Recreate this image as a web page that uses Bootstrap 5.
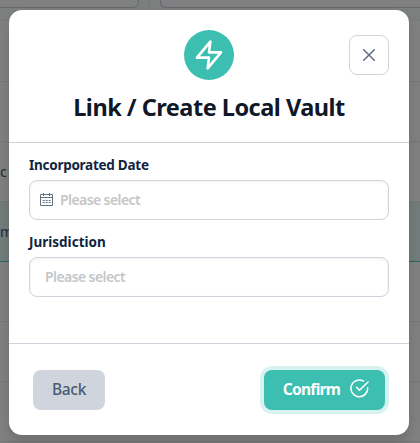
<!DOCTYPE html>
<html lang="en">
<head>
<meta charset="utf-8">
<meta name="viewport" content="width=device-width, initial-scale=1">
<title>Link / Create Local Vault</title>
<link href="https://cdn.jsdelivr.net/npm/bootstrap@5.3.0/dist/css/bootstrap.min.css" rel="stylesheet">
<style>
  body { font-family: "Segoe UI", "Noto Sans", "Open Sans", sans-serif; background: #808080; height: 443px; overflow: hidden; }
  .page-behind { height: 443px; color: #252a36; font-size: 14px; }
  .filters { height: 21px; background: #7b7f7e; border-bottom: 1px solid #767a7b; }
  .filter-box { height: 8px; background: #808080; border: 1px solid #686872; border-top: 0; border-radius: 0 0 6px 6px; }
  .filter-left { width: 139px; border-left: 0; border-bottom-left-radius: 0; }
  .filter-gap { width: 11px; height: 20px; border-right: 1px solid #747778; }
  .filter-right { margin-left: 10px; border-right: 0; border-bottom-right-radius: 0; }
  .line-row { height: 61px; flex: none; border-bottom: 1px solid #757676; }
  .line-row + .line-row { height: 60px; }
  .line-row.chosen { background: #727c7b; border-bottom-color: #266663; }
  .vault-dialog { left: 9px; top: 10px; width: 400px; height: 425px; border-radius: 13px; box-shadow: 0 8px 12px rgba(0,0,0,.13); }
  .dialog-top { height: 133px; padding-top: 20px; border-bottom: 1px solid #cbd3da; }
  .bolt { width: 50px; height: 50px; background: #3cbeb1; }
  .close-box { width: 40px; height: 40px; right: 20px; top: 25px; border: 1px solid #d0d2de; border-radius: 8px; }
  .dialog-title { font-size: 23.5px; line-height: 32px; margin-top: 11px; font-weight: 700; color: #101828; white-space: nowrap; letter-spacing: -.5px; }
  .dialog-fields { height: 200px; padding: 12px 20px 0; }
  .field-label { font-size: 13.5px; line-height: 20px; font-weight: 700; color: #10253f; margin-bottom: 5px; letter-spacing: -.26px; }
  .field-box { height: 40px; border: 1px solid #d0d4de; border-radius: 8px; box-shadow: inset 0 1px 3px rgba(16,24,40,.07); color: #c5c6c8; font-size: 14px; font-weight: 600; letter-spacing: -.58px; padding-left: 15px; padding-bottom: 2px; }
  .field-box + .field-label { margin-top: 12px; letter-spacing: 0; }
  .date-box { padding-left: 8px; gap: 5px; }
  .dialog-bottom { height: 92px; border-top: 1px solid #d0d4de; padding: 0 24px; }
  .act { height: 40px; border: 0; border-radius: 8px; font-size: 15.5px; padding: 0; }
  .act-back, .act-back:hover { width: 72px; background: #d0d4dd; color: #475b72; font-weight: 500; letter-spacing: -.3px; }
  .act-confirm, .act-confirm:hover { width: 121px; background: #3cbeb1; color: #fff; box-shadow: 0 0 0 4px #d8f2ef; font-weight: 700; letter-spacing: -.68px; gap: 10px; padding-left: 3px; }
  .act-confirm svg { margin-bottom: 2px; }
</style>
</head>
<body>
<div class="page-behind d-flex flex-column">
  <div class="filters d-flex flex-shrink-0">
    <div class="filter-box filter-left"></div>
    <div class="filter-gap"></div>
    <div class="filter-box filter-right flex-grow-1"></div>
  </div>
  <div class="line-row"></div>
  <div class="line-row"></div>
  <div class="line-row d-flex align-items-center">c</div>
  <div class="line-row chosen d-flex align-items-center">m</div>
  <div class="line-row"></div>
  <div class="line-row"></div>
  <div class="line-row"></div>
</div>
<div class="vault-dialog position-absolute bg-white d-flex flex-column" role="dialog" aria-labelledby="dialogTitle">
  <div class="dialog-top position-relative d-flex flex-column align-items-center">
    <div class="bolt rounded-circle d-flex align-items-center justify-content-center">
      <svg width="32" height="32" viewBox="0 0 24 24" fill="none" stroke="#fff" stroke-width="2" stroke-linecap="round" stroke-linejoin="round"><path d="M13 2 3 14h9l-1 8 10-12h-9l1-8z"/></svg>
    </div>
    <h1 class="dialog-title mb-0" id="dialogTitle">Link / Create Local Vault</h1>
    <button class="close-box position-absolute bg-white p-0 d-flex align-items-center justify-content-center" aria-label="Close">
      <svg width="12" height="12" viewBox="0 0 12 12" fill="none" stroke="#667085" stroke-width="1.6" stroke-linecap="round"><path d="m.7.7 10.6 10.6M11.3.7.7 11.3"/></svg>
    </button>
  </div>
  <div class="dialog-fields">
    <div class="field-label">Incorporated Date</div>
    <div class="field-box date-box d-flex align-items-center">
      <svg width="17" height="16" viewBox="0 0 17 16" fill="none" stroke="#667085"><path d="M2.5 3.5h12v11h-12zM2.5 6.5h12M5.5 2v3M11.5 2v3"/><path d="M4.7 9.5h8M4.7 11.5h8" stroke-dasharray="2 1"/></svg>
      <span>Please select</span>
    </div>
    <div class="field-label">Jurisdiction</div>
    <div class="field-box d-flex align-items-center"><span>Please select</span></div>
  </div>
  <div class="dialog-bottom d-flex align-items-center justify-content-between">
    <button class="btn act act-back">Back</button>
    <button class="btn act act-confirm d-flex align-items-center justify-content-center">Confirm
      <svg width="19" height="19" viewBox="0 0 20 20" fill="none" stroke="#fff" stroke-width="1.6" stroke-linecap="round" stroke-linejoin="round"><path d="M18.6 9.2A8.8 8.8 0 1 1 14 2.1M7 8.8l3 3 9-8.7"/></svg>
    </button>
  </div>
</div>
<script src="https://cdn.jsdelivr.net/npm/bootstrap@5.3.0/dist/js/bootstrap.bundle.min.js"></script>
</body>
</html>
